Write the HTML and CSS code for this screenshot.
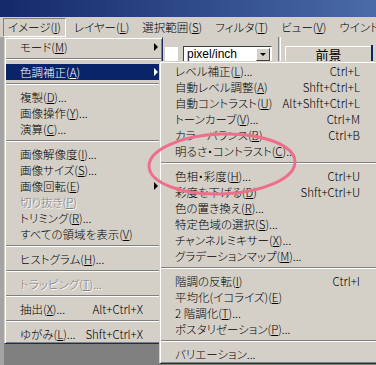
FILE: index.html
```html
<!DOCTYPE html>
<html lang="ja">
<head>
    <meta charset="UTF-8">
    <title>イメージ - 色調補正</title>
    <link rel="stylesheet" href="styles.css">
</head>
<body>
    <div class="titlebar"></div>
    <div class="menubar">
        <span class="mb-item active">イメージ(<u>I</u>)</span>
        <span class="mb-item">レイヤー(<u>L</u>)</span>
        <span class="mb-item">選択範囲(<u>S</u>)</span>
        <span class="mb-item">フィルタ(<u>T</u>)</span>
        <span class="mb-item">ビュー(<u>V</u>)</span>
        <span class="mb-item">ウインドウ(<u>W</u>)</span>
    </div>
    <div class="workspace">
        <div class="options">
            <span class="opt-input"></span>
            <span class="opt-select">pixel/inch<span class="opt-drop"></span></span>
            <span class="opt-sep"></span>
            <span class="opt-button">前景</span>
            <span class="opt-edge"></span>
        </div>

        <div class="menu main-menu">
            <div class="row"><span class="label">モード(<u>M</u>)</span><span class="arrow"></span></div>
            <div class="sep"></div>
            <div class="row selected"><span class="label">色調補正(<u>A</u>)</span><span class="arrow"></span></div>
            <div class="sep"></div>
            <div class="row"><span class="label">複製(<u>D</u>)...</span></div>
            <div class="row"><span class="label">画像操作(<u>Y</u>)...</span></div>
            <div class="row"><span class="label">演算(<u>C</u>)...</span></div>
            <div class="sep"></div>
            <div class="row"><span class="label">画像解像度(<u>I</u>)...</span></div>
            <div class="row"><span class="label">画像サイズ(<u>S</u>)...</span></div>
            <div class="row"><span class="label">画像回転(<u>E</u>)</span><span class="arrow"></span></div>
            <div class="row disabled"><span class="label">切り抜き(<u>P</u>)</span></div>
            <div class="row"><span class="label">トリミング(<u>R</u>)...</span></div>
            <div class="row"><span class="label">すべての領域を表示(<u>V</u>)</span></div>
            <div class="sep"></div>
            <div class="row"><span class="label">ヒストグラム(<u>H</u>)...</span></div>
            <div class="sep"></div>
            <div class="row disabled"><span class="label">トラッピング(<u>T</u>)...</span></div>
            <div class="sep"></div>
            <div class="row"><span class="label">抽出(<u>X</u>)...</span><span class="key">Alt+Ctrl+X</span></div>
            <div class="sep"></div>
            <div class="row"><span class="label">ゆがみ(<u>L</u>)...</span><span class="key">Shft+Ctrl+X</span></div>
        </div>

        <div class="menu sub-menu">
            <div class="row"><span class="label">レベル補正(<u>L</u>)...</span><span class="key">Ctrl+L</span></div>
            <div class="row"><span class="label">自動レベル調整(<u>A</u>)</span><span class="key">Shft+Ctrl+L</span></div>
            <div class="row"><span class="label">自動コントラスト(<u>U</u>)</span><span class="key">Alt+Shft+Ctrl+L</span></div>
            <div class="row"><span class="label">トーンカーブ(<u>V</u>)...</span><span class="key">Ctrl+M</span></div>
            <div class="row"><span class="label">カラーバランス(<u>B</u>)...</span><span class="key">Ctrl+B</span></div>
            <div class="row"><span class="label">明るさ・コントラスト(<u>C</u>)...</span></div>
            <div class="sep"></div>
            <div class="row"><span class="label">色相・彩度(<u>H</u>)...</span><span class="key">Ctrl+U</span></div>
            <div class="row"><span class="label">彩度を下げる(<u>D</u>)</span><span class="key">Shft+Ctrl+U</span></div>
            <div class="row"><span class="label">色の置き換え(<u>R</u>)...</span></div>
            <div class="row"><span class="label">特定色域の選択(<u>S</u>)...</span></div>
            <div class="row"><span class="label">チャンネルミキサー(<u>X</u>)...</span></div>
            <div class="row"><span class="label">グラデーションマップ(<u>M</u>)...</span></div>
            <div class="sep"></div>
            <div class="row"><span class="label">階調の反転(<u>I</u>)</span><span class="key">Ctrl+I</span></div>
            <div class="row"><span class="label">平均化(イコライズ)(<u>E</u>)</span></div>
            <div class="row"><span class="label">2 階調化(<u>T</u>)...</span></div>
            <div class="row"><span class="label">ポスタリゼーション(<u>P</u>)...</span></div>
            <div class="sep"></div>
            <div class="row"><span class="label">バリエーション...</span></div>
        </div>
    </div>

    <!-- hand-drawn circle around 明るさ・コントラスト / 色相・彩度 -->
    <svg class="mark" width="376" height="365" viewBox="0 0 376 365">
        <ellipse cx="222" cy="164" rx="73" ry="30" transform="rotate(-2 222 164)" fill="none" stroke="#ee6f8c" stroke-width="3"/>
    </svg>
</body>
</html>
```

FILE: styles.css
```css
body {
    margin: 0;
    width: 376px;
    height: 365px;
    overflow: hidden;
    position: relative;
    background-color: #808080;
    font-family: "Noto Sans CJK JP", sans-serif;
    font-size: 11.5px;
    font-weight: 300;
    font-feature-settings: "palt";
    color: #000;
}

u {
    text-decoration-thickness: 1px;
    text-underline-offset: 1px;
}

.titlebar {
    height: 17px;
    background: linear-gradient(to right, #14296a, #4a6aa8);
}

/* menu bar */
.menubar {
    height: 20px;
    background-color: #d4d0c8;
    display: flex;
    align-items: flex-start;
    gap: 3px;
    padding: 1px 0 0 3px;
    box-sizing: border-box;
    white-space: nowrap;
    overflow: hidden;
}

.mb-item {
    height: 19px;
    line-height: 17px;
    padding: 0 4px;
    border: 1px solid transparent;
    box-sizing: border-box;
}

.mb-item.active {
    border-color: #808080 #fff #fff #808080;
}

/* area under the menu bar */
.workspace {
    position: relative;
    height: 328px;
    border-left: 4px solid #a4a4a4;
}

.options {
    height: 26px;
    background-color: #d4d0c8;
    display: flex;
    align-items: flex-start;
    padding: 9px 0 0 161px;
    box-sizing: border-box;
}

.opt-input {
    width: 13px;
    height: 15px;
    margin-top: 1px;
    background-color: #fff;
}

.opt-select {
    width: 89px;
    height: 17px;
    margin-left: 5px;
    box-sizing: border-box;
    border: 1px solid;
    border-color: #404040 #fff #fff #404040;
    background-color: #fff;
    font-family: "Liberation Sans", sans-serif;
    font-size: 12px;
    font-weight: 400;
    line-height: 15px;
    padding-left: 3px;
    position: relative;
}

.opt-drop {
    position: absolute;
    right: 1px;
    top: 1px;
    width: 12px;
    height: 11px;
    background-color: #d4d0c8;
    border: 1px solid;
    border-color: #fff #404040 #404040 #fff;
}

.opt-drop::after {
    content: "";
    position: absolute;
    left: 3px;
    top: 4px;
    border-top: 3px solid #000;
    border-left: 3px solid transparent;
    border-right: 3px solid transparent;
}

.opt-sep {
    width: 1px;
    height: 26px;
    margin: -9px 0 0 6px;
    border-left: 1px solid #808080;
    border-right: 1px solid #fff;
}

.opt-button {
    width: 86px;
    height: 16px;
    margin-left: 4px;
    box-sizing: border-box;
    border-top: 1px solid #fff;
    border-left: 1px solid #fff;
    text-align: center;
    line-height: 15px;
    font-size: 13px;
    font-weight: 400;
}

.opt-edge {
    width: 2px;
    height: 17px;
    margin-top: -1px;
    background-color: #0a246a;
}

/* drop-down menus */
.menu {
    position: absolute;
    top: 0;
    background-color: #d4d0c8;
    border: 1px solid;
    border-color: #d4d0c8 #1c2c60 #1c2c60 #d4d0c8;
    box-shadow: inset 1px 1px #fff, inset -1px -1px #808080;
    padding: 1px;
    box-sizing: border-box;
    white-space: nowrap;
}

.main-menu {
    left: 0;
    width: 159px;
}

.sub-menu {
    left: 155px;
    top: 24px;
    width: 224px;
}

.row {
    height: 16px;
    line-height: 16px;
    display: flex;
    position: relative;
    padding: 0 18px 0 14px;
}

.sub-menu .row {
    padding: 0 21px 0 14px;
}

.row .label {
    flex: 1;
}

.row .arrow {
    position: absolute;
    right: 3px;
    top: 4px;
    border-left: 4px solid #000;
    border-top: 4px solid transparent;
    border-bottom: 4px solid transparent;
}

.row.selected {
    background-color: #0a246a;
    color: #fff;
}

.row.selected .arrow {
    border-left-color: #fff;
}

.row.disabled {
    color: #808080;
    text-shadow: 1px 1px #fff;
}

.sep {
    height: 0;
    margin: 3px 0 4px;
    border-top: 1px solid #808080;
    border-bottom: 1px solid #fff;
}

.mark {
    position: absolute;
    top: 0;
    left: 0;
    pointer-events: none;
}
```
